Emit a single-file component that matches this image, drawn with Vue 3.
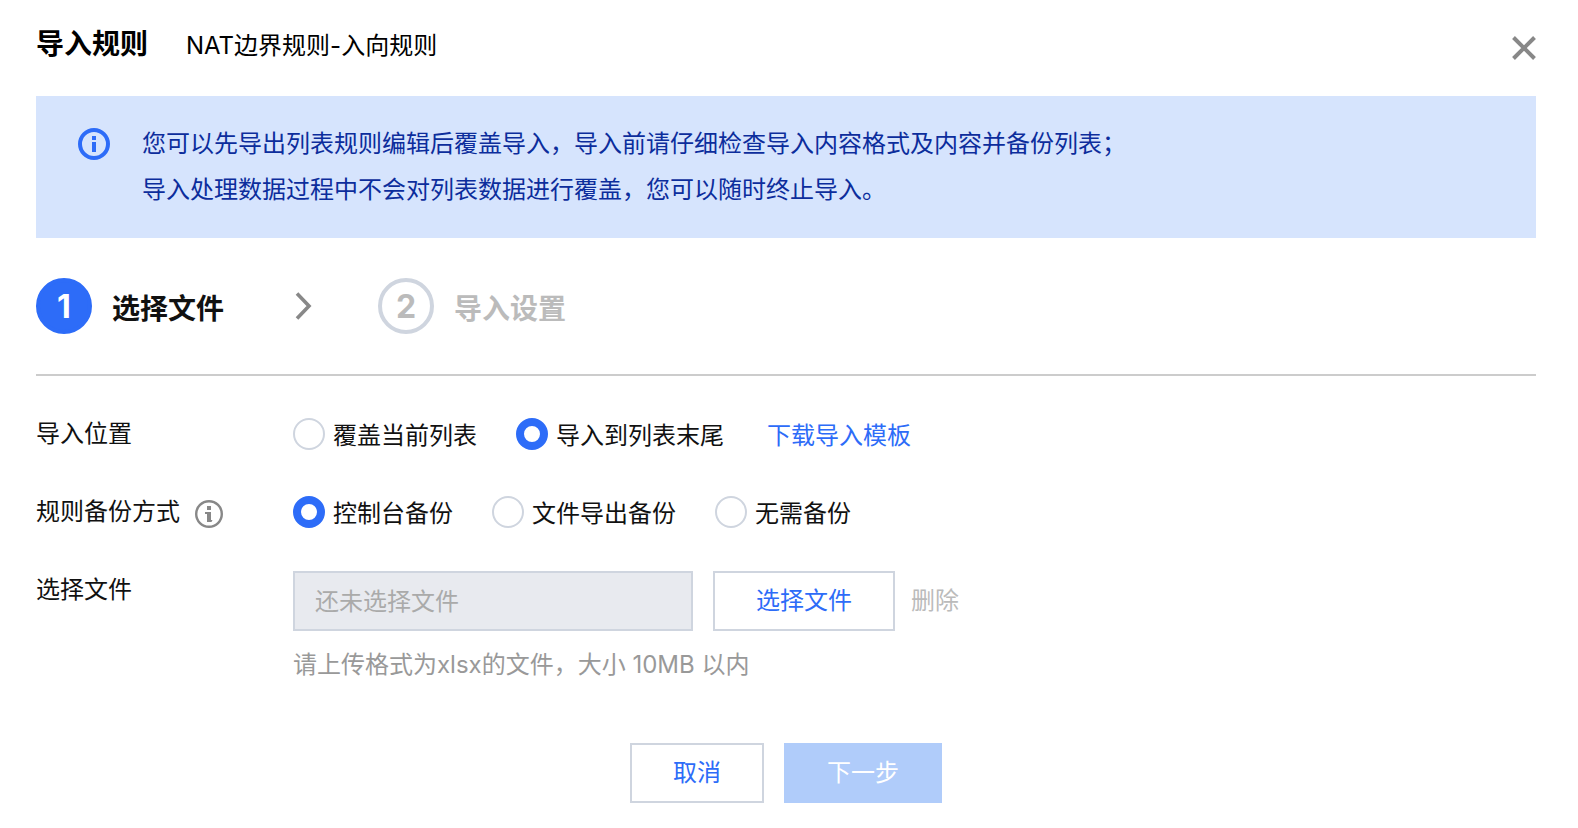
<script setup>
import { ref } from 'vue'

const positions = [
  { value: 'cover', label: '覆盖当前列表' },
  { value: 'append', label: '导入到列表末尾' },
]
const backups = [
  { value: 'console', label: '控制台备份' },
  { value: 'export', label: '文件导出备份' },
  { value: 'none', label: '无需备份' },
]
const position = ref('append')
const backup = ref('console')
</script>

<template>
  <main class="dialog">
    <header class="head">
      <h1 class="title">导入规则</h1>
      <span class="subtitle">NAT边界规则-入向规则</span>
      <button class="close" type="button" aria-label="关闭">
        <svg width="24" height="24" viewBox="0 0 24 24" fill="none" stroke="#888" stroke-width="4">
          <path d="M1.5 1.5 22.5 22.5M22.5 1.5 1.5 22.5" />
        </svg>
      </button>
    </header>

    <section class="notice">
      <svg class="notice-icon" width="32" height="32" viewBox="0 0 32 32">
        <circle cx="16" cy="16" r="14" fill="none" stroke="#2d6cf8" stroke-width="4" />
        <path d="M14 8h4v4h-4zM14 14h4v10h-4z" fill="#2d6cf8" />
      </svg>
      <p class="notice-text">
        您可以先导出列表规则编辑后覆盖导入，导入前请仔细检查导入内容格式及内容并备份列表；<br />
        导入处理数据过程中不会对列表数据进行覆盖，您可以随时终止导入。
      </p>
    </section>

    <ol class="steps">
      <li class="step current">
        <span class="num">1</span>
        <span class="step-name">选择文件</span>
      </li>
      <li class="arrow" aria-hidden="true">
        <svg width="18" height="28" viewBox="0 0 18 28" fill="none" stroke="#888" stroke-width="3.6">
          <path d="M2 1.5 14 14 2 26.5" />
        </svg>
      </li>
      <li class="step">
        <span class="num">2</span>
        <span class="step-name">导入设置</span>
      </li>
    </ol>

    <form class="form" @submit.prevent>
      <div class="row" role="radiogroup" aria-labelledby="position-label">
        <span id="position-label" class="label">导入位置</span>
        <div class="options">
          <label v-for="o in positions" :key="o.value" class="option">
            <input v-model="position" class="radio" type="radio" name="position" :value="o.value" />
            <span class="option-text">{{ o.label }}</span>
          </label>
          <a class="link" href="#">下载导入模板</a>
        </div>
      </div>

      <div class="row" role="radiogroup" aria-labelledby="backup-label">
        <span class="label">
          <span id="backup-label">规则备份方式</span>
          <svg class="hint-icon" width="28" height="28" viewBox="0 0 28 28">
            <circle cx="14" cy="14" r="12.8" fill="none" stroke="#888" stroke-width="2.4" />
            <path d="M12 6h4v4h-4zM10 12h6v8h1.5l-1 2H12v-8h-2z" fill="#888" />
          </svg>
        </span>
        <div class="options">
          <label v-for="o in backups" :key="o.value" class="option">
            <input v-model="backup" class="radio" type="radio" name="backup" :value="o.value" />
            <span class="option-text">{{ o.label }}</span>
          </label>
        </div>
      </div>

      <div class="row">
        <label class="label" for="file-name">选择文件</label>
        <div class="file">
          <div class="file-line">
            <input id="file-name" class="file-name" type="text" placeholder="还未选择文件" disabled />
            <button class="btn" type="button">选择文件</button>
            <button class="remove" type="button" disabled>删除</button>
          </div>
          <p class="tip">请上传格式为xlsx的文件，大小 10MB 以内</p>
        </div>
      </div>

      <footer class="foot">
        <button class="btn" type="button">取消</button>
        <button class="btn primary" type="submit" disabled>下一步</button>
      </footer>
    </form>
  </main>
</template>

<style>
body {
  margin: 0;
  background: #fff;
}
</style>

<style scoped>
.dialog {
  box-sizing: border-box;
  padding: 24px 42px 24px 36px;
  font: 24px/40px Inter, "Noto Sans CJK SC", sans-serif;
  color: #111;
}
.dialog button,
.dialog input {
  font: inherit;
}
h1,
p,
ol {
  margin: 0;
  padding: 0;
}
.head {
  display: flex;
  align-items: center;
  height: 40px;
  color: #000;
}
.title {
  font-size: 28px;
  font-weight: 700;
  line-height: 40px;
}
.subtitle {
  margin-left: 38px;
  padding-top: 4px;
}
.close {
  display: flex;
  margin-left: auto;
  padding: 8px 0 0;
  border: 0;
  background: none;
  cursor: pointer;
}
.notice {
  display: flex;
  margin-top: 32px;
  padding: 25px 42px;
  background: #d6e4fd;
  color: #0c2d9c;
}
.notice-icon {
  flex: none;
  margin-top: 7px;
}
.notice-text {
  margin-left: 32px;
  line-height: 46px;
}
.steps {
  display: flex;
  align-items: center;
  list-style: none;
  margin-top: 40px;
  padding-bottom: 40px;
  border-bottom: 2px solid #ccc;
}
.step {
  display: flex;
  align-items: center;
  gap: 20px;
  font-size: 28px;
  font-weight: 700;
  color: #bbb;
}
.num {
  box-sizing: border-box;
  width: 56px;
  height: 56px;
  border: 4px solid #cfd5df;
  border-radius: 50%;
  font-size: 32px;
  line-height: 50px;
  text-align: center;
}
.step-name {
  padding-top: 6px;
}
.current {
  color: #111;
}
.current .num {
  border-color: #2d6cf8;
  background: #2d6cf8;
  color: #fff;
}
.arrow {
  display: flex;
  margin: 0 65px 0 71px;
}
.row {
  display: flex;
  align-items: flex-start;
}
.form {
  display: flex;
  flex-direction: column;
  gap: 38px;
  padding-top: 38px;
}
.label {
  display: flex;
  align-items: center;
  flex: none;
  width: 257px;
}
.hint-icon {
  margin: 4px 0 0 15px;
}
.options {
  display: flex;
  align-items: center;
  gap: 39px;
}
.option {
  display: flex;
  align-items: center;
  gap: 8px;
}
.option-text,
.link {
  padding-top: 4px;
  line-height: 36px;
}
.radio {
  appearance: none;
  box-sizing: border-box;
  width: 32px;
  height: 32px;
  margin: 0;
  border: 2px solid #cfd5df;
  border-radius: 50%;
  background: #fff;
}
.radio:checked {
  border: 8px solid #2d6cf8;
}
.link {
  margin-left: 4px;
  color: #2d6cf8;
  text-decoration: none;
}
.file {
  flex: 1;
  padding-top: 1px;
}
.file-line {
  display: flex;
  align-items: center;
}
.file-name {
  box-sizing: border-box;
  width: 400px;
  height: 60px;
  margin-right: 20px;
  padding: 0 20px;
  border: 2px solid #cfd5df;
  border-radius: 0;
  background: #e8eaef;
}
.file-name::placeholder {
  color: #aaa;
  opacity: 1;
}
.btn {
  box-sizing: border-box;
  height: 60px;
  padding: 0 41px;
  border: 2px solid #cfd5df;
  background: #fff;
  color: #2d6cf8;
}
.primary {
  border-color: #b0ccfa;
  background: #b0ccfa;
  color: #fff;
}
.remove {
  padding: 0;
  margin-left: 16px;
  border: 0;
  background: none;
  color: #bbb;
}
.tip {
  margin-top: 14px;
  color: #999;
}
.foot {
  display: flex;
  justify-content: center;
  gap: 20px;
  margin-top: 20px;
}
</style>
